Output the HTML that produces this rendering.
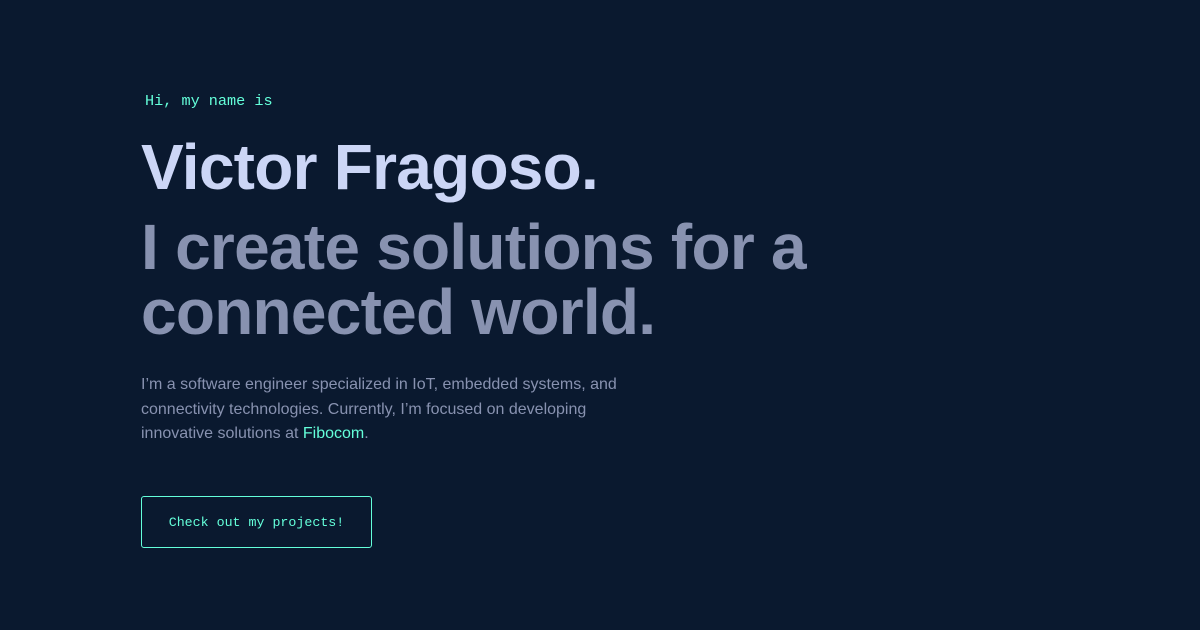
<!DOCTYPE html>
<html><head><style>
html,body{margin:0;padding:0;background:#0a192f;width:1200px;height:630px;overflow:hidden}
body{position:relative;font-family:"Liberation Sans",sans-serif}
.hi{position:absolute;left:145px;top:91px;font-family:"Liberation Mono",monospace;font-size:15.2px;color:#64ffda;line-height:20px}
h1,h2{margin:0;position:absolute;left:141px;font-size:64px;font-weight:bold;letter-spacing:-0.75px;line-height:65px;white-space:nowrap}
h1{top:135px;color:#ccd6f6}
h2{top:215px;color:#8892b0}
p{position:absolute;left:141px;top:373px;margin:0;width:490px;font-size:16px;line-height:24.5px;color:#8892b0}
p span{color:#64ffda}
.btn{position:absolute;left:141px;top:496px;width:231px;height:52px;border:1px solid #64ffda;border-radius:3px;box-sizing:border-box;color:#64ffda;font-family:"Liberation Mono",monospace;font-size:13.3px;display:flex;align-items:center;justify-content:center}
</style></head><body>
<div class="hi">Hi, my name is</div>
<h1>Victor Fragoso.</h1>
<h2>I create solutions for a<br>connected world.</h2>
<p>I’m a software engineer specialized in IoT, embedded systems, and connectivity technologies. Currently, I’m focused on developing innovative solutions at <span>Fibocom</span>.</p>
<div class="btn">Check out my projects!</div>
</body></html>
